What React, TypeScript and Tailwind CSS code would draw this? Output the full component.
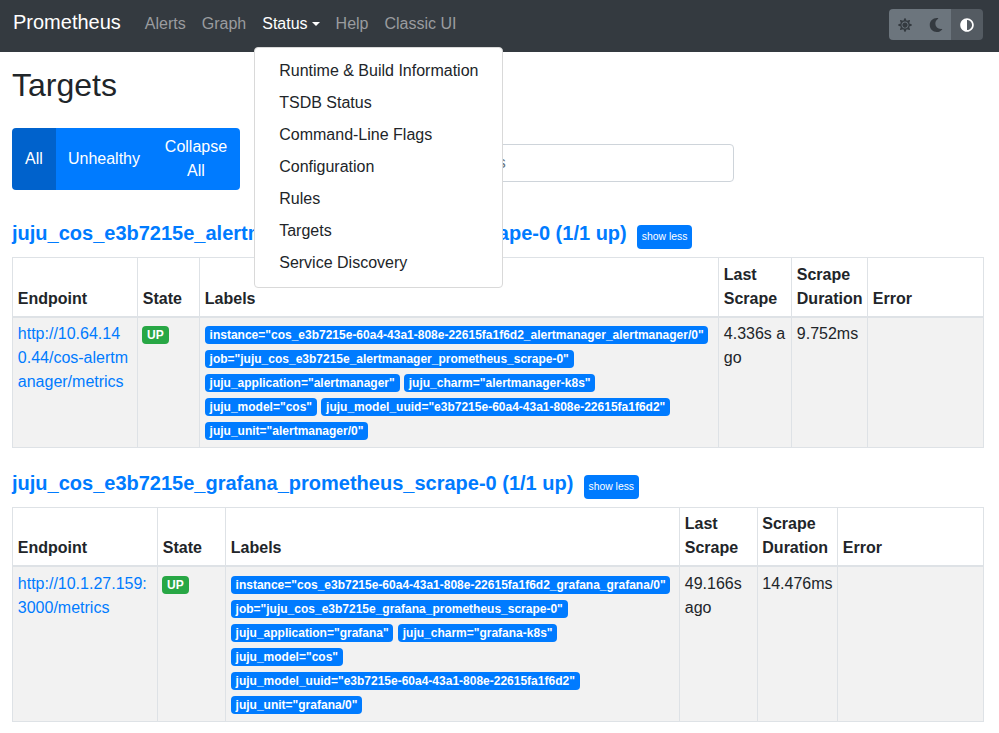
import { FaAdjust, FaMoon, FaSun } from "react-icons/fa";

const statusMenu = [
  "Runtime & Build Information",
  "TSDB Status",
  "Command-Line Flags",
  "Configuration",
  "Rules",
  "Targets",
  "Service Discovery",
];

interface Pool {
  title: string;
  endpoint: string;
  labels: string[];
  lastScrape: string;
  duration: string;
  widths: string[];
}

const pools: Pool[] = [
  {
    title: "juju_cos_e3b7215e_alertmanager_prometheus_scrape-0 (1/1 up)",
    endpoint: "http://10.64.140.44/cos-alertmanager/metrics",
    labels: [
      'instance="cos_e3b7215e-60a4-43a1-808e-22615fa1f6d2_alertmanager_alertmanager/0"',
      'job="juju_cos_e3b7215e_alertmanager_prometheus_scrape-0"',
      'juju_application="alertmanager"',
      'juju_charm="alertmanager-k8s"',
      'juju_model="cos"',
      'juju_model_uuid="e3b7215e-60a4-43a1-808e-22615fa1f6d2"',
      'juju_unit="alertmanager/0"',
    ],
    lastScrape: "4.336s ago",
    duration: "9.752ms",
    widths: ["w-[125px]", "w-[62px]", "w-[519px]", "w-[73px]", "w-[76px]", "w-[116px]"],
  },
  {
    title: "juju_cos_e3b7215e_grafana_prometheus_scrape-0 (1/1 up)",
    endpoint: "http://10.1.27.159:3000/metrics",
    labels: [
      'instance="cos_e3b7215e-60a4-43a1-808e-22615fa1f6d2_grafana_grafana/0"',
      'job="juju_cos_e3b7215e_grafana_prometheus_scrape-0"',
      'juju_application="grafana"',
      'juju_charm="grafana-k8s"',
      'juju_model="cos"',
      'juju_model_uuid="e3b7215e-60a4-43a1-808e-22615fa1f6d2"',
      'juju_unit="grafana/0"',
    ],
    lastScrape: "49.166s ago",
    duration: "14.476ms",
    widths: ["w-[145px]", "w-[68px]", "w-[454px]", "w-[77.5px]", "w-[80.5px]", "w-[146px]"],
  },
];

function Navbar() {
  return (
    <nav className="relative z-10 flex h-[52px] items-start bg-[#343a40] pl-[13px] pr-4">
      <a className="mr-4 mt-[7px] text-xl leading-[30px] text-white">Prometheus</a>
      <ul className="mt-1 flex">
        <li className="px-2 py-2 text-[#9a9c9f]">Alerts</li>
        <li className="px-2 py-2 text-[#9a9c9f]">Graph</li>
        <li className="relative px-2 py-2 text-white">
          Status
          <span className="ml-1 inline-block border-x-[4.8px] border-t-[4.8px] border-x-transparent border-t-white align-[3px]" />
          <div className="absolute left-0 top-[43px] whitespace-nowrap rounded border border-[#d9d9d9] bg-white pb-2 pt-[7px] text-[#212529]">
            {statusMenu.map((item) => (
              <div key={item} className="px-6 py-1">
                {item}
              </div>
            ))}
          </div>
        </li>
        <li className="px-2 py-2 text-[#9a9c9f]">Help</li>
        <li className="px-2 py-2 text-[#9a9c9f]">Classic UI</li>
      </ul>
      <div className="ml-auto mt-[9px] flex h-[31px] overflow-hidden rounded">
        <button className="flex w-[31px] items-center justify-center bg-[#6c757d] text-[#343a40]">
          <FaSun size={14} />
        </button>
        <button className="flex w-[31px] items-center justify-center bg-[#6c757d] text-[#343a40]">
          <FaMoon size={14} />
        </button>
        <button className="flex w-[32px] items-center justify-center bg-[#545b62] text-white">
          <FaAdjust size={14} />
        </button>
      </div>
    </nav>
  );
}

function Toolbar() {
  return (
    <div className="mb-[29px] flex items-start">
      <div className="flex h-[62px] w-[228px] overflow-hidden rounded text-center text-white">
        <button className="w-[44px] bg-[#0062cc]">All</button>
        <button className="w-[96px] bg-[#007bff]">Unhealthy</button>
        <button className="w-[88px] bg-[#007bff] px-3">Collapse All</button>
      </div>
      <div className="ml-4 mt-4 flex h-[38px] w-[478px] items-center rounded border border-[#ced4da] bg-white pl-[61px] text-[#6c757d]">
        Filter by endpoint or labels
      </div>
    </div>
  );
}

function PoolPanel({ pool }: { pool: Pool }) {
  const headers = ["Endpoint", "State", "Labels", "Last Scrape", "Scrape Duration", "Error"];
  return (
    <section className="mb-[20.5px]">
      <div className="mb-2 flex items-start">
        <a className="text-xl font-bold text-[#007bff]">{pool.title}</a>
        <button className="ml-[10.4px] mt-1.5 h-6 w-[55px] rounded bg-[#007bff] text-[10.4px] text-white">
          show less
        </button>
      </div>
      <table className="w-[971px] table-fixed border-collapse">
        <thead>
          <tr>
            {headers.map((header, i) => (
              <th
                key={header}
                className={`${pool.widths[i]} border border-b-2 border-[#dee2e6] p-[4.8px] text-left align-bottom font-bold`}
              >
                {header}
              </th>
            ))}
          </tr>
        </thead>
        <tbody>
          <tr className="bg-[#f2f2f2] align-top">
            <td className="break-all border border-[#dee2e6] py-[4.8px] pl-[4.8px] pr-[8.3px] text-[#007bff]">
              {pool.endpoint}
            </td>
            <td className="border border-[#dee2e6] py-[4.8px] pl-1 pr-[4.8px]">
              <span className="inline-block rounded bg-[#28a745] px-[5px] py-[3px] align-baseline text-xs font-bold leading-3 text-white">
                UP
              </span>
            </td>
            <td className="border border-[#dee2e6] py-[4.8px] pl-[4.8px] pr-2">
              {pool.labels.map((label) => (
                <span key={label}>
                  <span className="inline-block rounded bg-[#007bff] px-[4.8px] py-[3px] align-baseline text-xs font-bold leading-3 text-white">
                    {label}
                  </span>{" "}
                </span>
              ))}
            </td>
            <td className="break-all border border-[#dee2e6] p-[4.8px]">{pool.lastScrape}</td>
            <td className="border border-[#dee2e6] p-[4.8px]">{pool.duration}</td>
            <td className="border border-[#dee2e6] p-[4.8px]" />
          </tr>
        </tbody>
      </table>
    </section>
  );
}

export default function App() {
  return (
    <div className="min-h-screen bg-white font-['Liberation_Sans',Arial,sans-serif] text-base leading-6 text-[#212529]">
      <Navbar />
      <main className="pl-3 pr-[15px] pt-3.5">
        <h2 className="mb-[24px] text-[32px] leading-[38px]">Targets</h2>
        <Toolbar />
        {pools.map((pool) => (
          <PoolPanel key={pool.title} pool={pool} />
        ))}
      </main>
    </div>
  );
}
